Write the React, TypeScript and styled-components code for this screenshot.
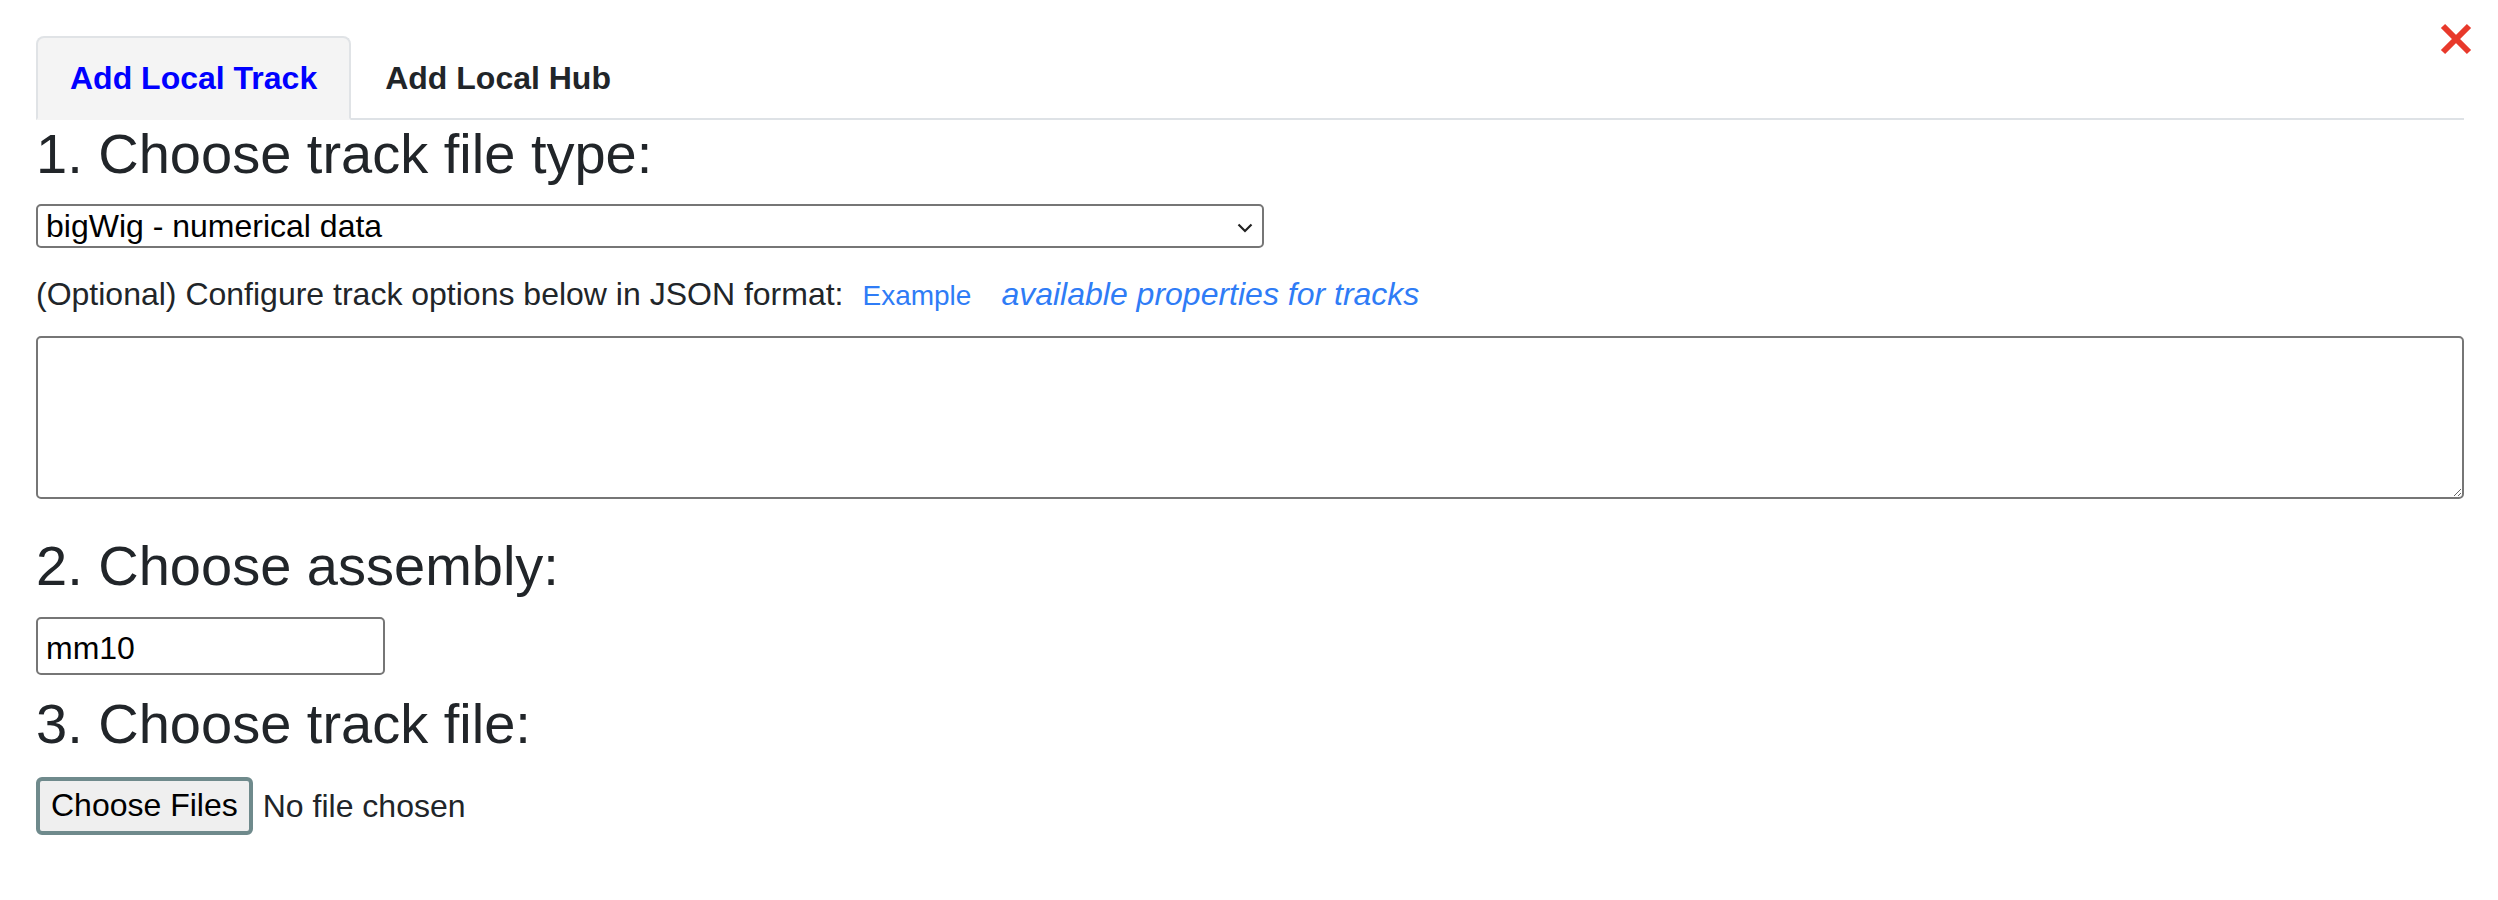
import React, { useState } from "react";
import styled, { createGlobalStyle } from "styled-components";

const GlobalStyle = createGlobalStyle`
  html, body {
    margin: 0;
    padding: 0;
    background: #ffffff;
  }
  body {
    font-family: "Liberation Sans", Arial, Helvetica, sans-serif;
    color: #212529;
    font-size: 32px;
    line-height: 1.5;
  }
  * { box-sizing: border-box; }
`;

const Page = styled.div`
  position: relative;
  padding: 36px 34px 40px 36px;
`;

const CloseButton = styled.button`
  position: absolute;
  top: 23px;
  right: 26px;
  width: 32px;
  height: 32px;
  padding: 0;
  border: none;
  background: transparent;
  cursor: pointer;
  display: flex;
`;

const TabList = styled.ul`
  display: flex;
  list-style: none;
  margin: 0;
  padding: 0;
  border-bottom: 2px solid #dee2e6;
`;

const TabItem = styled.li`
  margin-bottom: -2px;
`;

const TabLink = styled.a<{ $active?: boolean }>`
  display: block;
  padding: 16px 32px;
  font-size: 32px;
  font-weight: 700;
  line-height: 48px;
  text-decoration: none;
  cursor: pointer;
  border: 2px solid ${(p) => (p.$active ? "#e0e3e6" : "transparent")};
  border-bottom-color: ${(p) => (p.$active ? "#f4f4f4" : "transparent")};
  border-radius: 8px 8px 0 0;
  background: ${(p) => (p.$active ? "#f4f4f4" : "transparent")};
  color: ${(p) => (p.$active ? "#0000ff" : "#212529")};
`;

const Heading = styled.h3<{ $top: number; $bottom: number }>`
  font-size: 56px;
  font-weight: 400;
  line-height: 1.2;
  margin: ${(p) => p.$top}px 0 ${(p) => p.$bottom}px 0;
  color: #212529;
`;

const SelectWrap = styled.div`
  position: relative;
  width: 1228px;
`;

const Select = styled.select`
  appearance: none;
  -webkit-appearance: none;
  display: block;
  width: 100%;
  height: 44px;
  padding: 0 40px 0 8px;
  font-family: "Liberation Sans", Arial, sans-serif;
  font-size: 32px;
  color: #000;
  background: #fff;
  border: 2px solid #767676;
  border-radius: 5px;
`;

const Chevron = styled.svg`
  position: absolute;
  right: 11px;
  top: 19px;
  pointer-events: none;
`;

const OptionsRow = styled.div`
  display: flex;
  align-items: baseline;
  margin-top: 22px;
  line-height: 48px;
  font-size: 32px;
  color: #212529;
`;

const ExampleLink = styled.button`
  border: none;
  background: transparent;
  padding: 0;
  margin-left: 19px;
  font-family: "Liberation Sans", Arial, sans-serif;
  font-size: 28px;
  color: #2f7cf6;
  cursor: pointer;
`;

const PropsLink = styled.a`
  margin-left: 30px;
  font-style: italic;
  color: #2f7cf6;
  text-decoration: none;
  cursor: pointer;
`;

const JsonArea = styled.textarea`
  display: block;
  width: 100%;
  height: 163px;
  margin-top: 18px;
  font-family: "Liberation Mono", monospace;
  font-size: 26px;
  border: 2px solid #767676;
  border-radius: 5px;
  padding: 4px 6px;
`;

const TextInput = styled.input`
  display: block;
  width: 349px;
  height: 58px;
  padding: 4px 6px 0 8px;
  font-family: "Liberation Sans", Arial, sans-serif;
  font-size: 32px;
  color: #000;
  border: 2px solid #767676;
  border-radius: 5px;
  background: #fff;
`;

const FileRow = styled.div`
  display: flex;
  align-items: center;
  gap: 10px;
`;

const FileButton = styled.button`
  height: 58px;
  padding: 0 11px;
  font-family: "Liberation Sans", Arial, sans-serif;
  font-size: 32px;
  color: #000;
  background: #efefef;
  border: 4px solid #6f8a8c;
  border-radius: 6px;
  cursor: pointer;
`;

const FileStatus = styled.span`
  font-size: 32px;
  color: #212529;
`;

export default function App() {
  const [tab, setTab] = useState(0);
  return (
    <>
      <GlobalStyle />
      <Page>
        <CloseButton aria-label="close">
          <svg width="32" height="32" viewBox="0 0 32 32">
            <path d="M3 3 L29 29 M29 3 L3 29" stroke="#e8392b" strokeWidth="6" fill="none" />
          </svg>
        </CloseButton>
        <TabList>
          <TabItem>
            <TabLink $active={tab === 0} onClick={() => setTab(0)}>
              Add Local Track
            </TabLink>
          </TabItem>
          <TabItem>
            <TabLink $active={tab === 1} onClick={() => setTab(1)}>
              Add Local Hub
            </TabLink>
          </TabItem>
        </TabList>

        <Heading $top={0} $bottom={17}>1. Choose track file type:</Heading>
        <SelectWrap>
          <Select defaultValue="bigwig">
            <option value="bigwig">bigWig - numerical data</option>
            <option value="bigbed">bigBed - annotation data</option>
            <option value="bam">bam - read alignment</option>
          </Select>
          <Chevron width="16" height="10" viewBox="0 0 16 10">
            <path d="M1.5 1.5 L8 8 L14.5 1.5" stroke="#222" strokeWidth="2.2" fill="none" />
          </Chevron>
        </SelectWrap>
        <OptionsRow>
          <span>(Optional) Configure track options below in JSON format:</span>
          <ExampleLink>Example</ExampleLink>
          <PropsLink>available properties for tracks</PropsLink>
        </OptionsRow>
        <JsonArea />

        <Heading $top={33} $bottom={18}>2. Choose assembly:</Heading>
        <TextInput defaultValue="mm10" />

        <Heading $top={15} $bottom={19}>3. Choose track file:</Heading>
        <FileRow>
          <FileButton>Choose Files</FileButton>
          <FileStatus>No file chosen</FileStatus>
        </FileRow>
      </Page>
    </>
  );
}
